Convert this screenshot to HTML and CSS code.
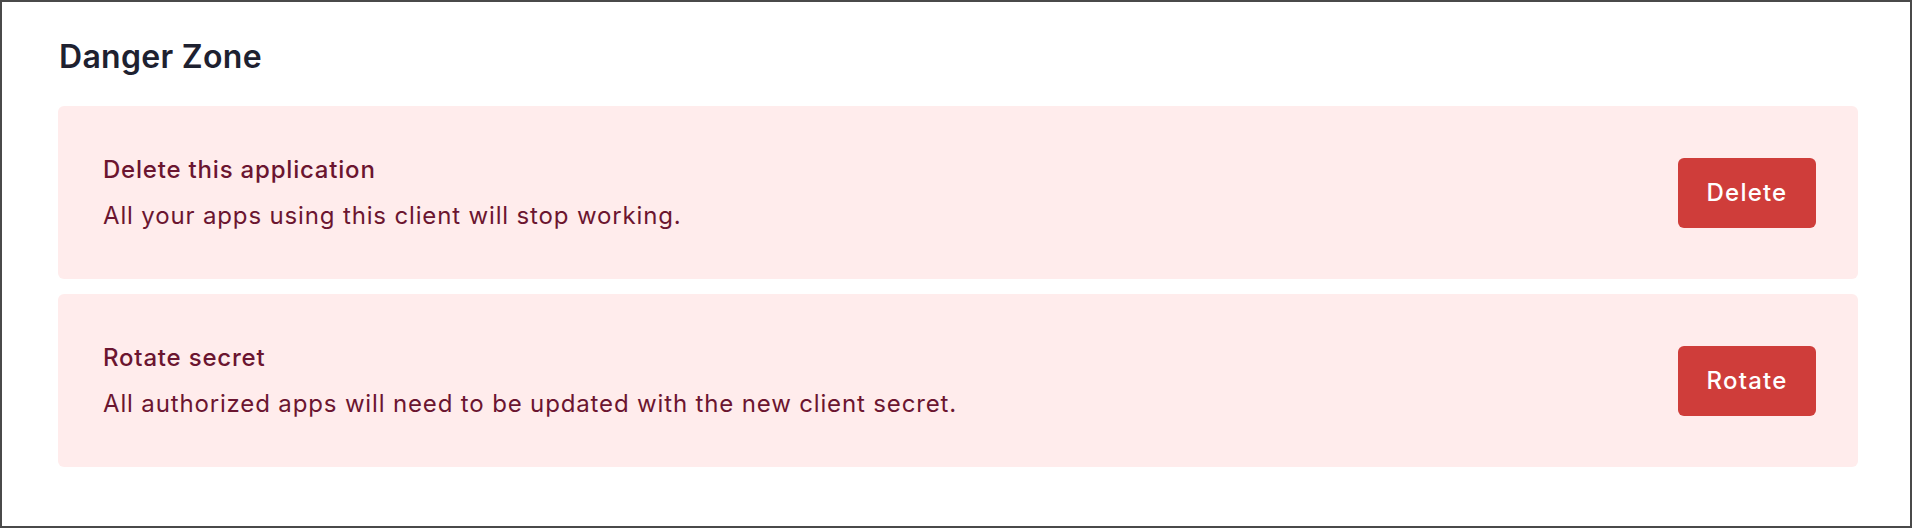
FILE: index.html
```html
<!DOCTYPE html>
<html lang="en">
<head>
<meta charset="utf-8">
<title>Danger Zone</title>
<link rel="stylesheet" href="styles.css">
</head>
<body>
<section class="frame">
  <h2 class="heading">Danger Zone</h2>
  <div class="card">
    <div class="card-text">
      <div class="card-title">Delete this application</div>
      <div class="card-desc">All your apps using this client will stop working.</div>
    </div>
    <button class="danger-btn">Delete</button>
  </div>
  <div class="card">
    <div class="card-text">
      <div class="card-title">Rotate secret</div>
      <div class="card-desc">All authorized apps will need to be updated with the new client secret.</div>
    </div>
    <button class="danger-btn">Rotate</button>
  </div>
</section>
</body>
</html>
```
FILE: styles.css
```css
html, body {
  margin: 0;
  padding: 0;
  background: #ffffff;
}
body {
  font-family: Inter, "Liberation Sans", sans-serif;
}
.frame {
  box-sizing: border-box;
  width: 1912px;
  height: 528px;
  border: 2px solid #4a4a4a;
  padding: 35px 52px 0 56px;
  background: #ffffff;
}
.heading {
  margin: 0 0 29px 1px;
  font-size: 32px;
  line-height: 40px;
  font-weight: 600;
  letter-spacing: 0.3px;
  color: #1e2130;
}
.card {
  box-sizing: border-box;
  display: flex;
  align-items: center;
  justify-content: space-between;
  height: 173px;
  padding: 0 42px 0 45px;
  margin-bottom: 15px;
  background: #ffecec;
  border-radius: 6px;
  color: #6b1530;
}
.card-title {
  font-size: 24px;
  line-height: 32px;
  font-weight: 500;
  letter-spacing: 0.8px;
  margin-bottom: 14px;
}
.card-desc {
  font-size: 24px;
  line-height: 32px;
  font-weight: 400;
  letter-spacing: 0.85px;
}
.danger-btn {
  width: 138px;
  height: 70px;
  border: none;
  border-radius: 6px;
  background: #cf3d3a;
  color: #ffffff;
  font-family: Inter, "Liberation Sans", sans-serif;
  font-size: 24px;
  font-weight: 500;
  letter-spacing: 1.2px;
  padding: 0;
}
```
